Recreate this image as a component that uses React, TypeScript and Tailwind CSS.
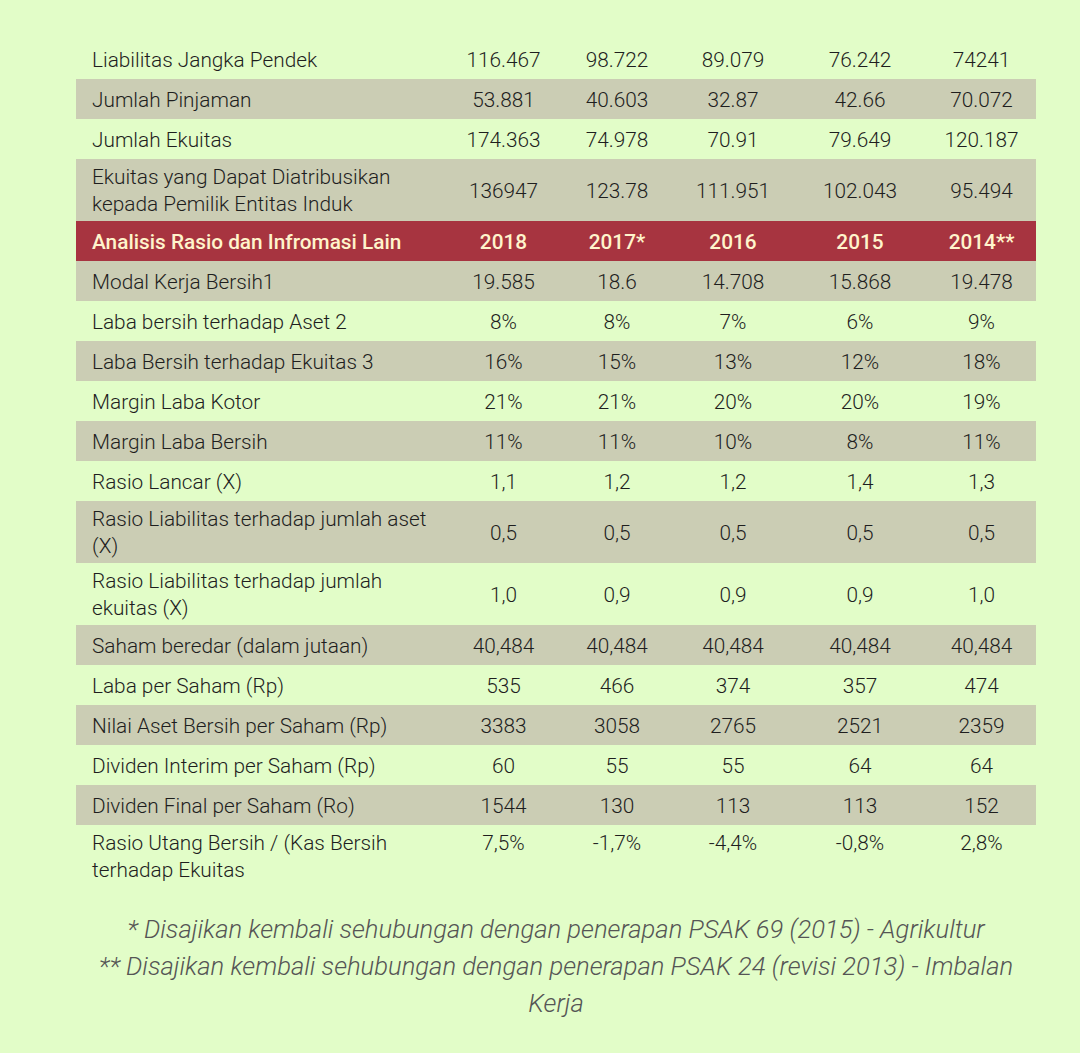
const years = ['2018', '2017*', '2016', '2015', '2014**']

type Row = { label: string[]; values: string[]; shade?: boolean; top?: boolean }

const before: Row[] = [
  { label: ['Liabilitas Jangka Pendek'], values: ['116.467', '98.722', '89.079', '76.242', '74241'] },
  { label: ['Jumlah Pinjaman'], values: ['53.881', '40.603', '32.87', '42.66', '70.072'], shade: true },
  { label: ['Jumlah Ekuitas'], values: ['174.363', '74.978', '70.91', '79.649', '120.187'] },
  {
    label: ['Ekuitas yang Dapat Diatribusikan', 'kepada Pemilik Entitas Induk'],
    values: ['136947', '123.78', '111.951', '102.043', '95.494'],
    shade: true,
  },
]

const after: Row[] = [
  { label: ['Modal Kerja Bersih1'], values: ['19.585', '18.6', '14.708', '15.868', '19.478'], shade: true },
  { label: ['Laba bersih terhadap Aset 2'], values: ['8%', '8%', '7%', '6%', '9%'] },
  { label: ['Laba Bersih terhadap Ekuitas 3'], values: ['16%', '15%', '13%', '12%', '18%'], shade: true },
  { label: ['Margin Laba Kotor'], values: ['21%', '21%', '20%', '20%', '19%'] },
  { label: ['Margin Laba Bersih'], values: ['11%', '11%', '10%', '8%', '11%'], shade: true },
  { label: ['Rasio Lancar (X)'], values: ['1,1', '1,2', '1,2', '1,4', '1,3'] },
  {
    label: ['Rasio Liabilitas terhadap jumlah aset', '(X)'],
    values: ['0,5', '0,5', '0,5', '0,5', '0,5'],
    shade: true,
  },
  { label: ['Rasio Liabilitas terhadap jumlah', 'ekuitas (X)'], values: ['1,0', '0,9', '0,9', '0,9', '1,0'] },
  { label: ['Saham beredar (dalam jutaan)'], values: ['40,484', '40,484', '40,484', '40,484', '40,484'], shade: true },
  { label: ['Laba per Saham (Rp)'], values: ['535', '466', '374', '357', '474'] },
  { label: ['Nilai Aset Bersih per Saham (Rp)'], values: ['3383', '3058', '2765', '2521', '2359'], shade: true },
  { label: ['Dividen Interim per Saham (Rp)'], values: ['60', '55', '55', '64', '64'] },
  { label: ['Dividen Final per Saham (Ro)'], values: ['1544', '130', '113', '113', '152'], shade: true },
  {
    label: ['Rasio Utang Bersih / (Kas Bersih', 'terhadap Ekuitas'],
    values: ['7,5%', '-1,7%', '-4,4%', '-0,8%', '2,8%'],
    top: true,
  },
]

const grid = 'grid grid-cols-[370px_115px_112px_120px_134px_109px]'

function DataRow({ row }: { row: Row }) {
  return (
    <div
      className={`${grid} min-h-[40px] ${row.top ? 'items-start' : 'items-center'} ${
        row.shade ? 'bg-[#cbcdb4]' : ''
      }`}
    >
      <div className="pt-[5px] pb-[3px] pl-4">
        {row.label.map((l) => (
          <div key={l}>{l}</div>
        ))}
      </div>
      {row.values.map((v, i) => (
        <div key={i} className="pt-[5px] pb-[3px] text-center">
          {v}
        </div>
      ))}
    </div>
  )
}

export default function App() {
  return (
    <div className="min-h-[1053px] bg-[#e2fdc8] pt-[39px] font-['Roboto','Noto_Sans',sans-serif] text-[20.8px] font-light leading-[27px] text-[#1e1e1e]">
      <div className="ml-[76px] w-[960px]">
        {before.map((r) => (
          <DataRow key={r.label[0]} row={r} />
        ))}

        {/* ratio header */}
        <div className={`${grid} h-[40px] items-center bg-[#a73440] pt-[2px] font-medium text-[#fff4cc]`}>
          <div className="pl-4">Analisis Rasio dan Infromasi Lain</div>
          {years.map((y) => (
            <div key={y} className="text-center">
              {y}
            </div>
          ))}
        </div>

        {after.map((r) => (
          <DataRow key={r.label[0]} row={r} />
        ))}

        <div className="mt-[24px] text-center text-[25.6px] italic leading-[37px] text-[#555555]">
          <div className="whitespace-nowrap">
            * Disajikan kembali sehubungan dengan penerapan PSAK 69 (2015) - Agrikultur
          </div>
          <div className="whitespace-nowrap">
            ** Disajikan kembali sehubungan dengan penerapan PSAK 24 (revisi 2013) - Imbalan
          </div>
          <div>Kerja</div>
        </div>
      </div>
    </div>
  )
}
